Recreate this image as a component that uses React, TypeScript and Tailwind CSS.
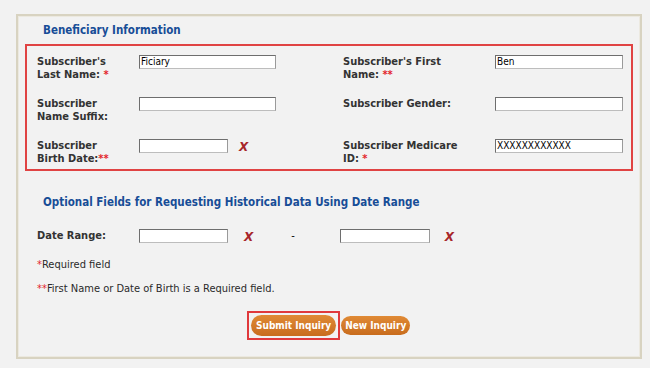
import React from "react";

const font = { fontFamily: "Tahoma, 'DejaVu Sans Condensed', 'DejaVu Sans', sans-serif" };

function Star({ n = 1 }: { n?: number }) {
  return <span className="text-[#e3262b]">{"*".repeat(n)}</span>;
}

function Input({ w, value }: { w: string; value?: string }) {
  return (
    <div
      className={`${w} h-[14px] bg-white border border-t-[#6e6e6e] border-l-[#6e6e6e] border-r-[#9a9a9a] border-b-[#bdbdbd] text-[10px] leading-[12px] pl-[1px] text-black overflow-hidden whitespace-nowrap`}
    >
      {value}
    </div>
  );
}

function XMark({ className = "" }: { className?: string }) {
  return (
    <div
      className={`text-[#a8262a] font-bold italic text-[12px] leading-[14px] pt-[1px] ${className}`}
      style={{ fontFamily: "'DejaVu Sans', sans-serif" }}
    >
      X
    </div>
  );
}

function Label({ children }: { children: React.ReactNode }) {
  return <div className="font-bold text-[11px] leading-[13px] text-[#333]">{children}</div>;
}

export default function App() {
  return (
    <div className="w-[650px] h-[368px] bg-[#f2f2f2] pt-[14px] pl-[16px]" style={font}>
      <div className="w-[626px] h-[345px] border-2 border-[#d8d3c1] shadow-[inset_0_0_0_1px_#ece9e0] pt-[7px] pl-[7px]">
        <div className="pl-[18px] text-[11.5px] font-bold leading-[14px] text-[#174d97]">Beneficiary Information</div>
        <div className="mt-[7px] w-[608px] h-[127px] border-2 border-[#e04343] pt-[9px] pl-[10px]">
          <div className="grid grid-cols-[102px_204px_152px_auto] gap-y-[16px]">
            <Label>
              Subscriber's
              <br />
              Last Name: <Star />
            </Label>
            <Input w="w-[137px]" value="Ficiary" />
            <Label>
              Subscriber's First
              <br />
              Name: <Star n={2} />
            </Label>
            <Input w="w-[128px]" value="Ben" />

            <Label>
              Subscriber
              <br />
              Name Suffix:
            </Label>
            <Input w="w-[137px]" />
            <Label>Subscriber Gender:</Label>
            <Input w="w-[128px]" />

            <Label>
              Subscriber
              <br />
              Birth Date:<Star n={2} />
            </Label>
            <div className="flex items-start gap-[11px]">
              <Input w="w-[89px]" />
              <XMark />
            </div>
            <Label>
              Subscriber Medicare
              <br />
              ID: <Star />
            </Label>
            <Input w="w-[128px]" value="XXXXXXXXXXXX" />
          </div>
        </div>

        <div className="mt-[24px] pl-[18px] text-[11.5px] font-bold leading-[14px] text-[#174d97]">
          Optional Fields for Requesting Historical Data Using Date Range
        </div>

        <div className="mt-[20px] pl-[12px] flex items-start h-[14px]">
          <div className="w-[102px]">
            <Label>Date Range:</Label>
          </div>
          <Input w="w-[89px]" />
          <XMark className="ml-[16px]" />
          <div className="ml-[38px] text-[11px] leading-[13px]">-</div>
          <div className="ml-[45px]">
            <Input w="w-[90px]" />
          </div>
          <XMark className="ml-[15px]" />
        </div>

        <div className="mt-[15px] pl-[12px] text-[11px] leading-[13px] text-[#2a2a2a]">
          <Star />Required field
        </div>
        <div className="mt-[11px] pl-[12px] text-[11px] leading-[13px] text-[#2a2a2a]">
          <Star n={2} />First Name or Date of Birth is a Required field.
        </div>

        <div className="mt-[16px] pl-[222px] flex items-center">
          <div className="border-2 border-[#e0393c] p-[2px]">
            <button className="block h-[21px] px-[5px] rounded-full bg-gradient-to-b from-[#e08a35] to-[#c86c1d] text-white font-bold text-[10px] leading-[21px]">
              Submit Inquiry
            </button>
          </div>
          <button className="block ml-[1px] h-[19px] px-[4px] rounded-full bg-gradient-to-b from-[#e08a35] to-[#c86c1d] text-white font-bold text-[10px] leading-[19px]">
            New Inquiry
          </button>
        </div>
      </div>
    </div>
  );
}
